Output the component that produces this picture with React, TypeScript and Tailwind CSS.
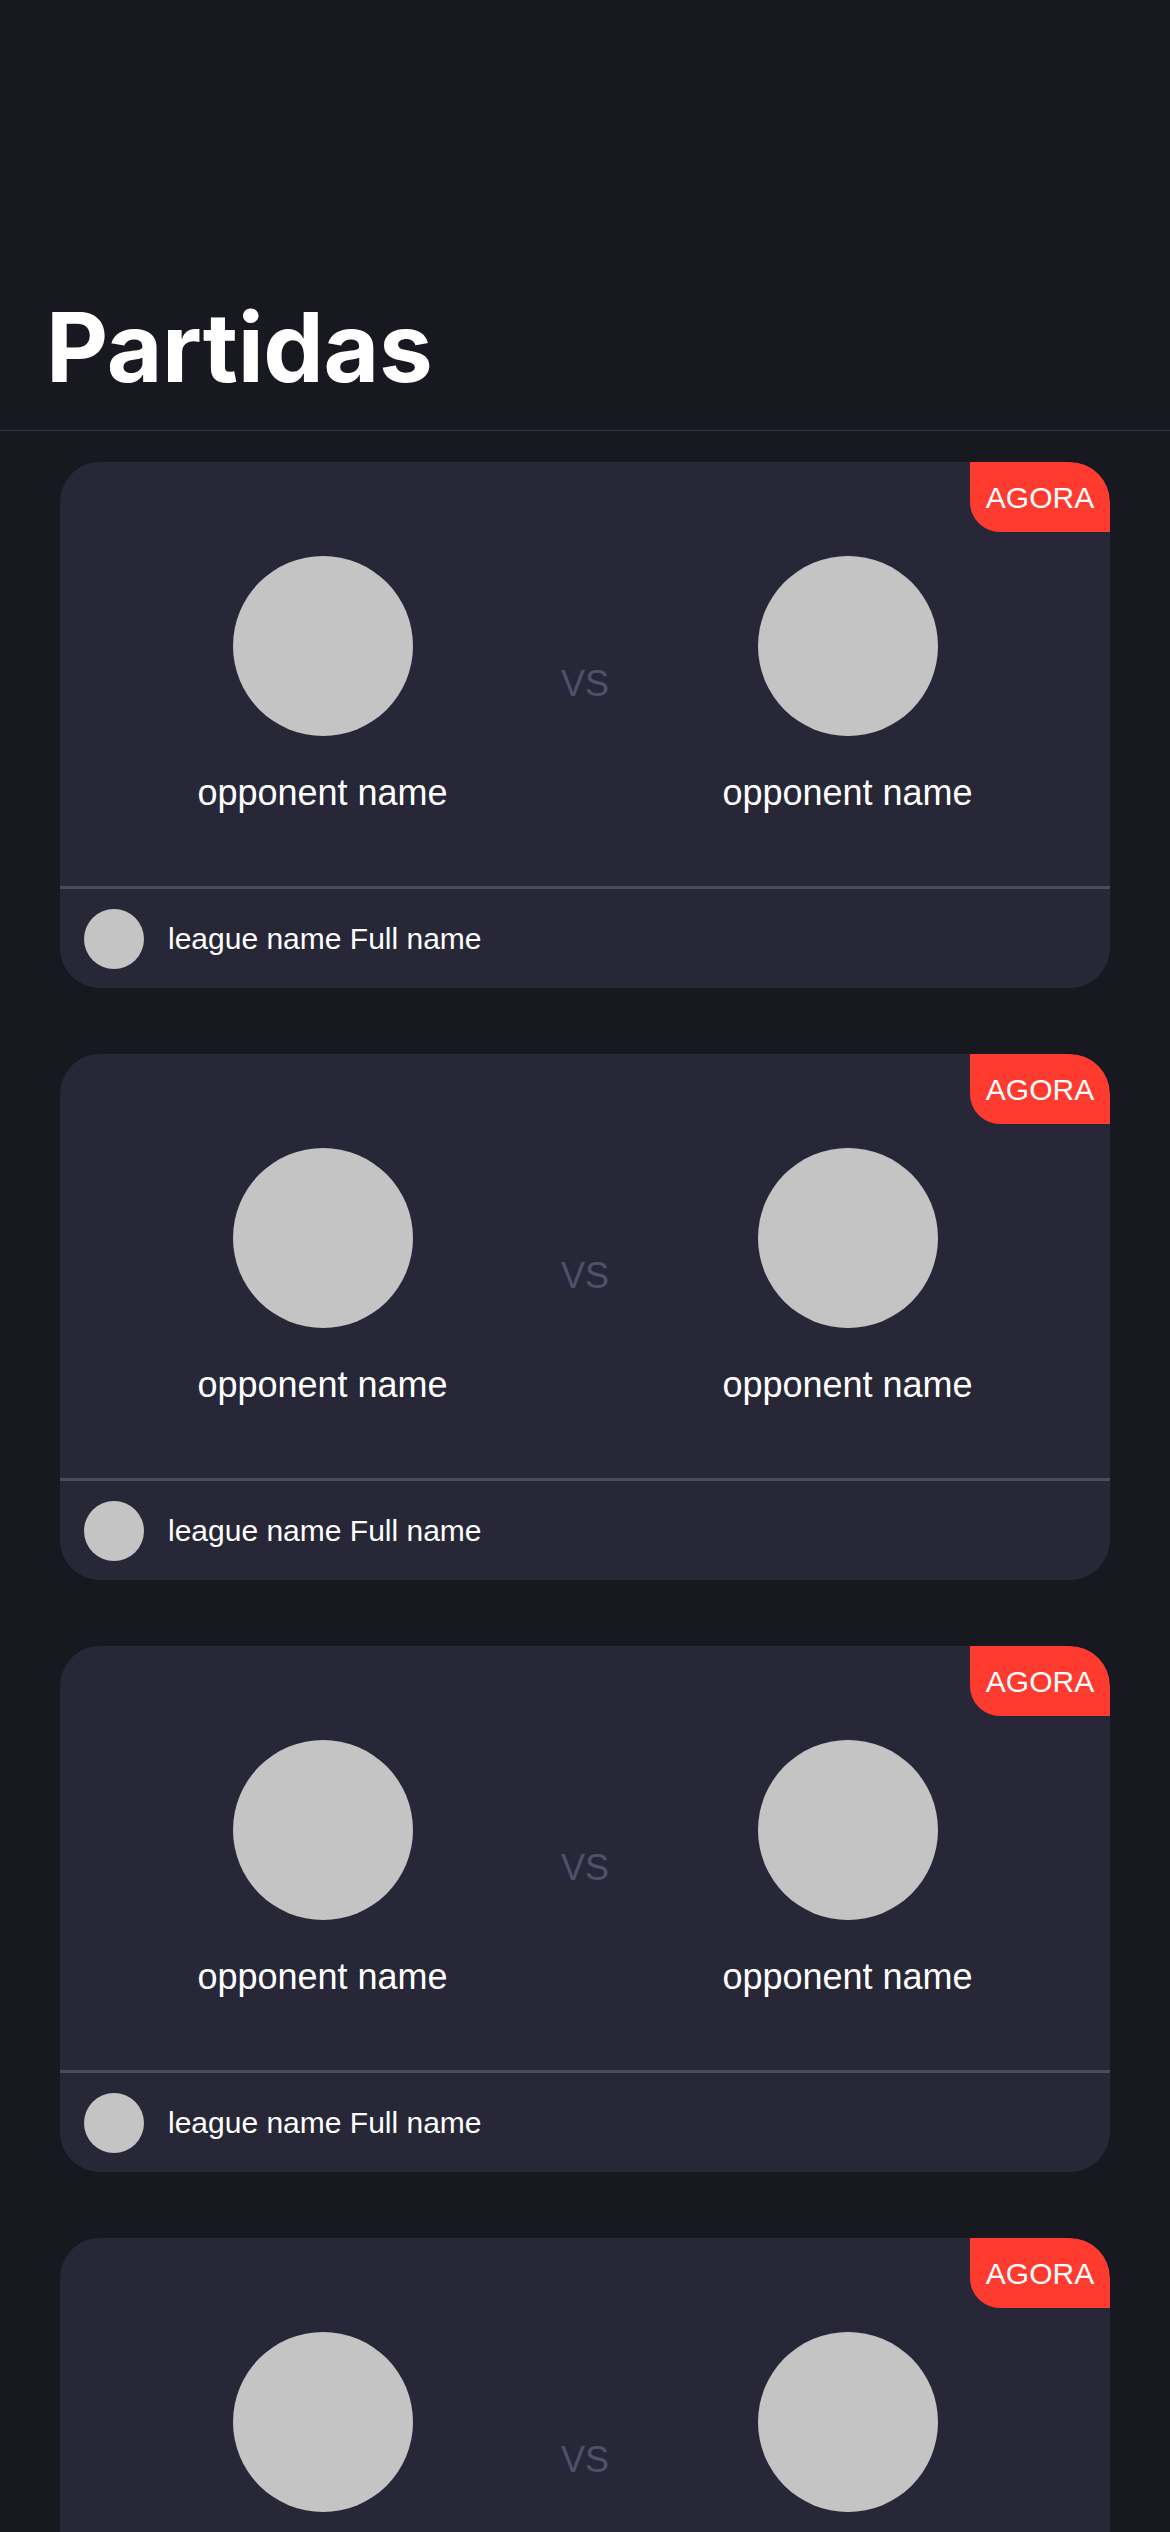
const matches = [1, 2, 3, 4]

function MatchCard() {
  return (
    <div className="relative flex h-[526px] flex-col overflow-hidden rounded-[40px] bg-[#272738]">
      {/* live badge */}
      <div className="absolute right-0 top-0 flex h-[70px] w-[140px] items-center justify-center rounded-bl-[30px] rounded-tr-[40px] bg-[#ff3b30] text-[30px] text-white">
        AGORA
      </div>

      {/* opponents */}
      <div className="flex h-[424px] pt-[94px]">
        <div className="flex flex-1 flex-col items-center">
          <div className="h-[180px] w-[180px] rounded-full bg-[#c4c4c4]" />
          <p className="mt-[36px] text-[36px] leading-[41px] text-white">opponent name</p>
        </div>
        <div className="flex w-0 justify-center">
          <span className="mt-[107px] text-[36px] leading-[41px] text-[#50506a]">VS</span>
        </div>
        <div className="flex flex-1 flex-col items-center">
          <div className="h-[180px] w-[180px] rounded-full bg-[#c4c4c4]" />
          <p className="mt-[36px] text-[36px] leading-[41px] text-white">opponent name</p>
        </div>
      </div>

      <div className="h-[3px] bg-[#4b4b5f]" />

      {/* league */}
      <div className="flex flex-1 items-center gap-[24px] px-[24px]">
        <div className="h-[60px] w-[60px] rounded-full bg-[#c4c4c4]" />
        <span className="text-[30px] text-white">league name Full name</span>
      </div>
    </div>
  )
}

export default function App() {
  return (
    <div className="h-[2532px] overflow-hidden bg-[#181820] font-['Liberation_Sans',Arial,sans-serif]">
      <header className="border-b border-[#363643] pb-[35px] pl-[46px] pt-[299px]">
        <h1 className="font-['Inter',sans-serif] text-[96px] font-bold leading-none tracking-[-0.3px] text-white">
          Partidas
        </h1>
      </header>

      <div className="flex flex-col gap-[66px] px-[60px] pt-[31px]">
        {matches.map((m) => (
          <MatchCard key={m} />
        ))}
      </div>
    </div>
  )
}
